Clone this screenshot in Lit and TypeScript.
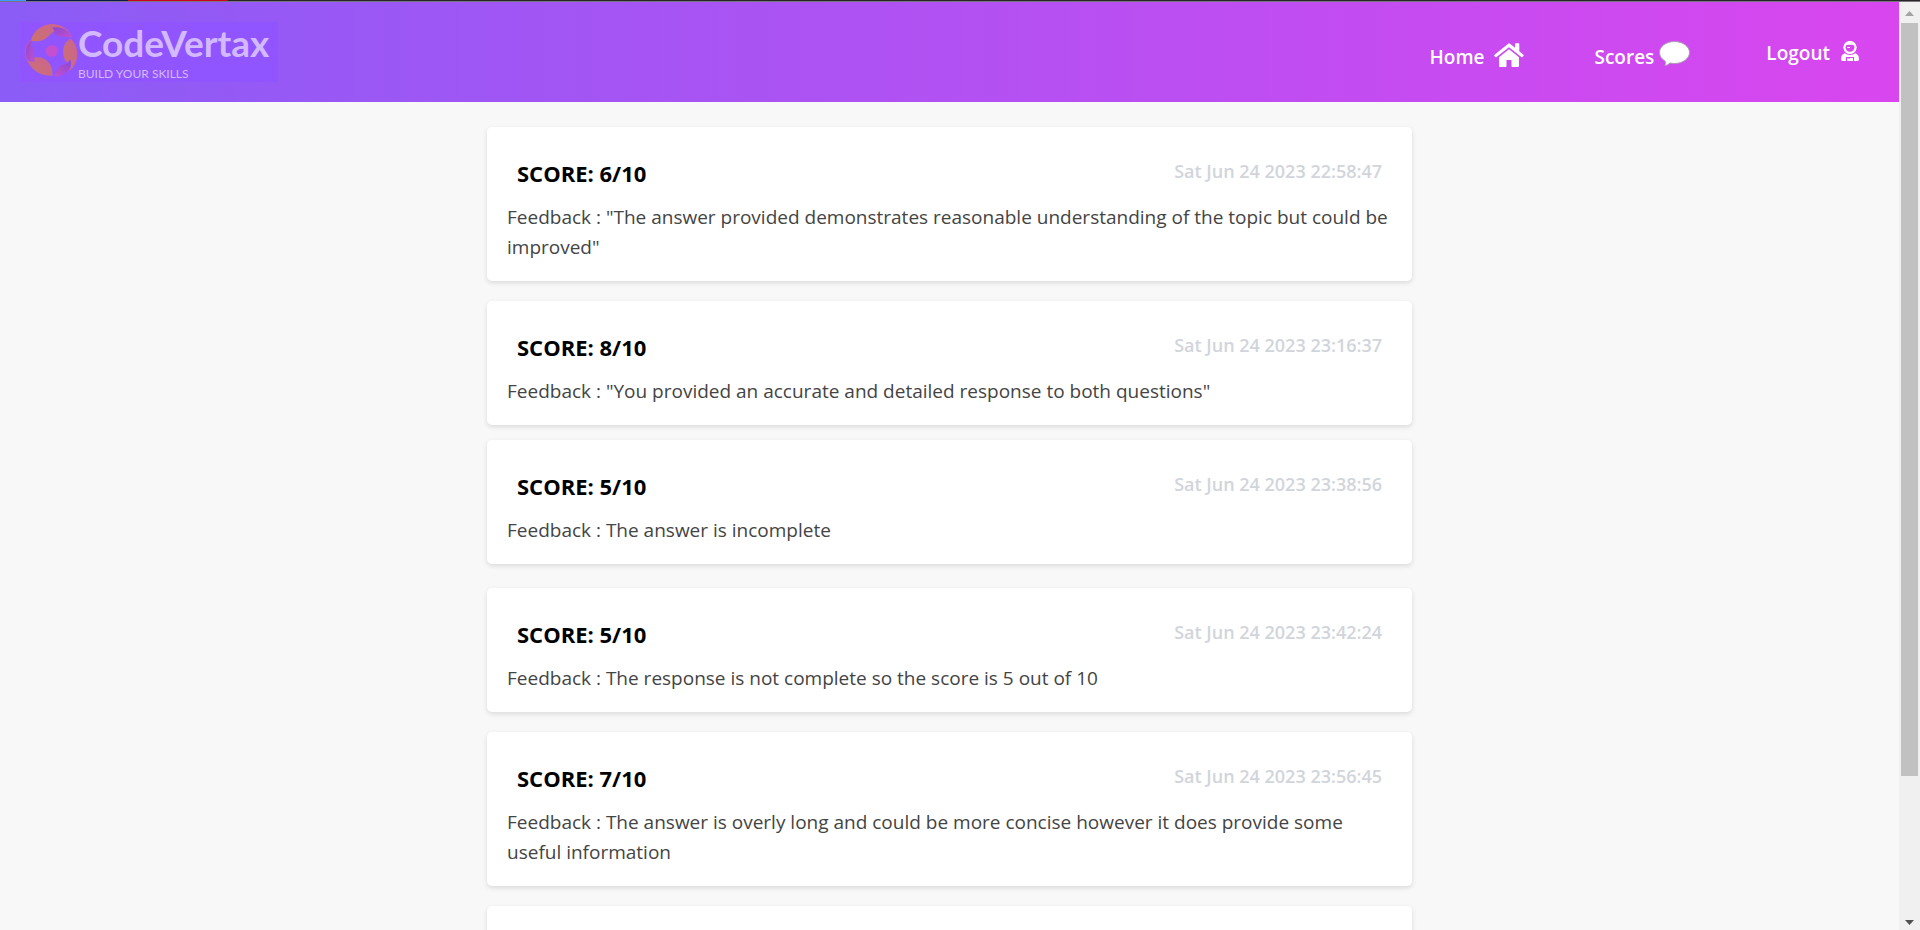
import { LitElement, html, css } from "lit";
import { customElement, property } from "lit/decorators.js";

interface Score {
  score: number;
  time: string;
  feedback: string;
  gap: "small" | "medium" | "large";
}

const SCORES: Score[] = [
  { score: 6, time: "Sat Jun 24 2023 22:58:47", gap: "medium", feedback: '"The answer provided demonstrates reasonable understanding of the topic but could be improved"' },
  { score: 8, time: "Sat Jun 24 2023 23:16:37", gap: "small", feedback: '"You provided an accurate and detailed response to both questions"' },
  { score: 5, time: "Sat Jun 24 2023 23:38:56", gap: "large", feedback: "The answer is incomplete" },
  { score: 5, time: "Sat Jun 24 2023 23:42:24", gap: "medium", feedback: "The response is not complete so the score is 5 out of 10" },
  { score: 7, time: "Sat Jun 24 2023 23:56:45", gap: "medium", feedback: "The answer is overly long and could be more concise however it does provide some useful information" },
];

@customElement("score-card")
export class ScoreCard extends LitElement {
  @property({ attribute: false }) entry?: Score;

  static styles = css`
    :host {
      display: block;
      box-sizing: border-box;
      min-height: 124px;
      padding: 20px 20px 19px;
      border-radius: 5px;
      background: #fff;
      box-shadow: 0 2px 5px rgba(0, 0, 0, 0.12);
    }
    .head {
      display: flex;
      justify-content: space-between;
      padding: 10px 10px 0;
    }
    .score {
      margin: 0;
      font-size: 22px;
      line-height: 32px;
      font-weight: 700;
      color: #000;
    }
    .time {
      font-size: 18px;
      line-height: 28px;
      font-weight: 600;
      color: #d1d5db;
    }
    .feedback {
      margin: 13px 0 0;
      font-size: 19px;
      line-height: 30px;
      color: #444;
    }
  `;

  render() {
    const e = this.entry;
    if (!e) return html``;
    return html`
      <div class="head">
        <h2 class="score">${`SCORE: ${e.score}/10`}</h2>
        <time class="time">${e.time}</time>
      </div>
      <p class="feedback">${`Feedback : ${e.feedback}`}</p>
    `;
  }
}

@customElement("app-root")
export class AppRoot extends LitElement {
  static styles = css`
    :host {
      display: flex;
      flex-direction: column;
      height: 100vh;
      overflow: hidden;
      background: #f8f8f8;
      font-family: "Segoe UI", "Open Sans", "Noto Sans", sans-serif;
    }
    .strip {
      flex: none;
      height: 1px;
      border-bottom: 1px solid #7a7480;
      background: linear-gradient(90deg, #3b9bff 26px, #0b1a4a 26px 128px, #d0021b 128px 228px, #262626 228px);
    }
    .body {
      flex: 1;
      min-height: 0;
      display: flex;
    }
    .page {
      flex: 1;
      min-width: 0;
      overflow: hidden;
    }
    .bar {
      display: flex;
      align-items: center;
      justify-content: space-between;
      height: 100px;
      padding: 0 40px 0 20px;
      background: linear-gradient(90deg, #8b5cf6, #d946ef);
    }
    .brand {
      display: flex;
      align-items: center;
      width: 258px;
      height: 60px;
      background: #9155ff;
      text-decoration: none;
    }
    .mark {
      flex: none;
      width: 58px;
      height: 60px;
    }
    .words {
      display: flex;
      flex-direction: column;
      gap: 1px;
      padding-bottom: 4px;
      white-space: nowrap;
      color: #d3b9ff;
      font-family: Lato, sans-serif;
    }
    .name {
      font-size: 37px;
      line-height: 46px;
      font-weight: 700;
    }
    .tag {
      font-size: 12px;
      line-height: 14px;
    }
    .nav {
      display: flex;
      gap: 70px;
    }
    .link {
      display: flex;
      align-items: flex-start;
      gap: 5px;
      padding-top: 10px;
      font-size: 19px;
      line-height: 28px;
      font-weight: 600;
      color: #fff;
      text-decoration: none;
    }
    .logout {
      padding-top: 6px;
    }
    .icon {
      height: 28px;
      overflow: visible;
      fill: #fff;
    }
    .list {
      width: 925px;
      max-width: 100%;
      margin: 25px auto 0;
    }
    .small { margin-bottom: 15px; }
    .medium { margin-bottom: 20px; }
    .large { margin-bottom: 24px; }
    .scroll {
      flex: none;
      display: flex;
      flex-direction: column;
      align-items: center;
      width: 21px;
      background: #f0f0f0;
    }
    .arrow { flex: none; width: 21px; height: 21px; }
    .track { flex: 1; width: 17px; }
    .thumb { height: 85%; background: #c1c1c1; }
  `;

  render() {
    return html`
      <div class="strip"></div>
      <div class="body">
        <div class="page">
          <header class="bar">
            <a class="brand" href="#">
              <svg class="mark" viewBox="60 66 174 180" aria-hidden="true">
                <defs>
                  <linearGradient id="warm" x1="0" y1="1" x2="1" y2="0">
                    <stop offset="0" stop-color="#cb7270" />
                    <stop offset="1" stop-color="#cc6390" />
                  </linearGradient>
                  <linearGradient id="cool" x1="0" y1="0" x2="1" y2="1">
                    <stop offset="0" stop-color="#8d46cf" />
                    <stop offset="1" stop-color="#c350cf" />
                  </linearGradient>
                  <linearGradient id="coolUp" x1="0" y1="1" x2="1" y2="0">
                    <stop offset="0" stop-color="#c350cf" />
                    <stop offset="1" stop-color="#8d46cf" />
                  </linearGradient>
                </defs>
                <path fill="url(#warm)" d="M93 122C98 92 128 71 160 72C184 74 205 88 216 110C200 88 180 80 158 84C162 86 165 88 165 93C150 98 142 124 108 124Q99 124 93 122Z" />
                <path fill="url(#cool)" d="M155 83C180 77 208 88 216 114C198 108 184 114 168 105C158 99 169 91 155 83Z" />
                <path fill="url(#warm)" d="M212 116C228 130 234 152 231 172C228 192 220 204 205 215C214 205 215 192 211 179C206 180 205 188 200 187C185 168 184 130 212 116Z" />
                <path fill="url(#coolUp)" d="M211 179C217 205 196 229 163 230C170 215 170 205 184 196C195 190 206 195 211 179Z" />
                <path fill="url(#warm)" d="M157 227C125 228 92 212 80 176C84 183 96 188 104 183C104 178 101 175 104 172C136 168 161 192 157 227Z" />
                <path fill="url(#cool)" d="M94 120C74 134 68 166 84 179C90 184 98 185 104 183C97 172 101 160 99 150C97 138 90 132 94 120Z" />
                <path fill="none" stroke="#c05abc" stroke-width="3" d="M93 120C74 138 72 160 81 178" />
                <circle cx="155" cy="153" r="18" fill="#c44fd0" />
              </svg>
              <span class="words"><span class="name">CodeVertax</span><span class="tag">BUILD YOUR SKILLS</span></span>
            </a>
            <nav class="nav">
              <a class="link" href="#home">Home
                <svg class="icon" width="35" viewBox="0 0 35 28" aria-hidden="true">
                  <path d="M19.500 0.500Q20 0 21 0.800L26 4.800V1.500Q26 0.300 27 0.300H29.300Q30.300 0.300 30.300 1.500V8.300L34.500 11.800Q35 12.300 34.500 13L33.500 14Q33 14.500 32.300 14L20 4.200L7.500 14Q7 14.500 6.400 14L5.400 13Q5 12.300 5.500 11.800Z" />
                  <path d="M20 6.300L30 14.300V23Q30 24 29 24H23.300Q22.500 24 22.500 23V17H17.500V23Q17.500 24 16.700 24H11Q10 24 10 23V14.300Z" />
                </svg>
              </a>
              <a class="link" href="#scores">Scores
                <svg class="icon" width="37" viewBox="0 0 37 28" aria-hidden="true">
                  <path stroke="#a99bab" stroke-width="1" d="M15.500 -1.500C24 -1.500 30.500 3.500 30.500 9.500C30.500 15.500 24 20.500 15.500 20.500Q13 20.500 11 20C9.500 21.500 7.500 22.500 5.800 22.500C6.500 21 6.800 19.500 6 18C2.500 16 0.500 13 0.500 9.500C0.500 3.500 7 -1.500 15.500 -1.500Z" />
                </svg>
              </a>
              <a class="link logout" href="#logout">Logout
                <svg class="icon" width="24" viewBox="0 0 24 28" aria-hidden="true">
                  <path fill-rule="evenodd" d="M15 2C19 2 21 4.800 21.300 7Q22.500 8.500 21.300 10C20.800 12.800 18.500 15 15 15S9.200 12.800 8.700 10Q7.500 8.500 8.700 7C9 4.800 11 2 15 2ZM12.500 5.800Q10.500 6 10.500 8.300C10.500 11 12.500 12.800 15 12.800S19.500 11 19.500 8.300Q19.500 6 17.500 5.800Z" />
                  <path fill="none" stroke="#fff" d="M12 8.500H15" />
                  <path fill-rule="evenodd" d="M9.500 14.300Q12 16 15 16T20.500 14.300C23 15.500 24 17.500 24 20Q24 22 22.500 22H7.500Q6 22 6 20C6 17.500 7 15.500 9.500 14.300ZM11 18V22H12.200V19H13.500V20H14.500V19H18V22H19V18Z" />
                </svg>
              </a>
            </nav>
          </header>
          <main class="list">
            ${SCORES.map((s) => html`<score-card class=${s.gap} .entry=${s}></score-card>`)}
            <score-card></score-card>
          </main>
        </div>
        <div class="scroll" aria-hidden="true">
          <svg class="arrow" viewBox="0 0 21 21"><path fill="#a3a3a3" d="M6 14L10.500 9L15 14Z" /></svg>
          <div class="track"><div class="thumb"></div></div>
          <svg class="arrow" viewBox="0 0 21 21"><path fill="#505050" d="M6 11L10.500 16L15 11Z" /></svg>
        </div>
      </div>
    `;
  }
}
